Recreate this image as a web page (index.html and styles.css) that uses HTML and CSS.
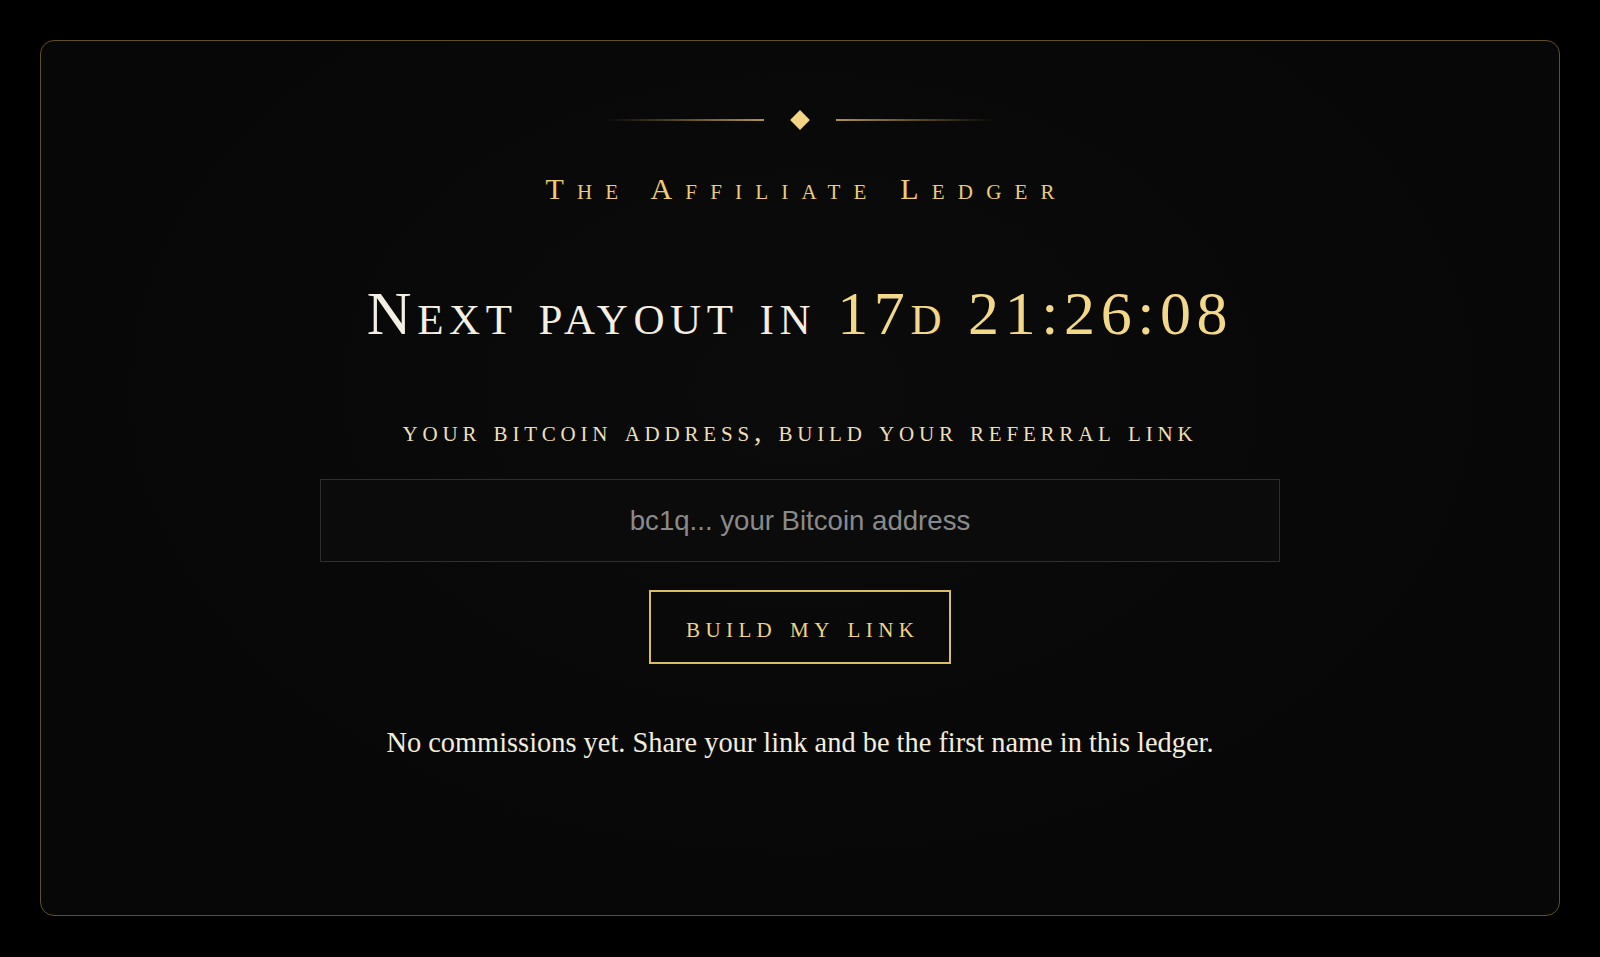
FILE: index.html
```html
<!DOCTYPE html>
<html lang="en">
<head>
	<meta charset="UTF-8">
	<title>The Affiliate Ledger</title>
	<link rel="stylesheet" href="styles.css">
</head>
<body>
	<div class="ledger-card">
		<div class="ornament">
			<span class="ornament-line left"></span>
			<span class="ornament-diamond"></span>
			<span class="ornament-line right"></span>
		</div>
		<h2 class="ledger-title">The Affiliate Ledger</h2>
		<h1 class="payout">Next payout in <span class="countdown">17d 21:26:08</span></h1>
		<p class="address-label">your bitcoin address, build your referral link</p>
		<form class="link-form" onsubmit="return false">
			<input class="address-input" type="text" placeholder="bc1q... your Bitcoin address">
			<button class="build-button" type="submit">build my link</button>
		</form>
		<p class="empty-note">No commissions yet. Share your link and be the first name in this ledger.</p>
	</div>
</body>
</html>
```

FILE: styles.css
```css
html, body {
	margin: 0;
	background-color: #000;
}
body {
	padding: 40px;
	font-family: "Liberation Serif", "DejaVu Serif", serif;
}
.ledger-card {
	box-sizing: border-box;
	height: 876px;
	border: 1px solid #5e5128;
	border-radius: 14px;
	background: radial-gradient(ellipse at 50% 40%, #0b0b0b 0%, #070707 70%);
	padding-top: 69px;
	display: flex;
	flex-direction: column;
	align-items: center;
}
.ornament {
	display: flex;
	align-items: center;
	gap: 29px;
	height: 20px;
}
.ornament-line {
	display: block;
	width: 158px;
	height: 2px;
}
.ornament-line.left {
	background: linear-gradient(to right, rgba(190, 160, 80, 0), #b0924a);
}
.ornament-line.right {
	background: linear-gradient(to left, rgba(190, 160, 80, 0), #b0924a);
}
.ornament-diamond {
	display: block;
	width: 14px;
	height: 14px;
	background-color: #f3d485;
	transform: rotate(45deg);
}
.ledger-title {
	margin: 44px 0 0;
	font-size: 30px;
	font-weight: normal;
	font-variant: small-caps;
	letter-spacing: 0.44em;
	padding-left: 0.44em;
	color: #eccd74;
	line-height: 1;
}
.payout {
	margin: 78px 0 0;
	font-size: 62px;
	font-weight: normal;
	font-variant: small-caps;
	letter-spacing: 0.09em;
	color: #f4efe2;
	line-height: 1;
}
.countdown {
	color: #f2d889;
}
.address-label {
	margin: 72px 0 0;
	font-size: 30px;
	font-variant: small-caps;
	letter-spacing: 0.16em;
	color: #ecdfba;
	line-height: 1;
}
.link-form {
	margin-top: 33px;
	display: flex;
	flex-direction: column;
	align-items: center;
	gap: 28px;
}
.address-input {
	box-sizing: border-box;
	width: 960px;
	height: 83px;
	border: 1px solid #2e2e2e;
	background-color: #0b0b0b;
	color: #ddd;
	font-family: "Liberation Sans", Arial, sans-serif;
	font-size: 27.6px;
	text-align: center;
	outline: none;
}
.address-input::placeholder {
	color: #8a8a8a;
}
.build-button {
	box-sizing: border-box;
	width: 302px;
	height: 74px;
	border: 2px solid #d9bc64;
	background-color: transparent;
	color: #efd483;
	font-family: "Liberation Serif", "DejaVu Serif", serif;
	font-size: 30px;
	font-variant: small-caps;
	letter-spacing: 0.18em;
	padding: 0 0 0 0.18em;
	cursor: pointer;
}
.empty-note {
	margin: 63px 0 0;
	font-size: 28.4px;
	color: #f1ecdc;
}
```
